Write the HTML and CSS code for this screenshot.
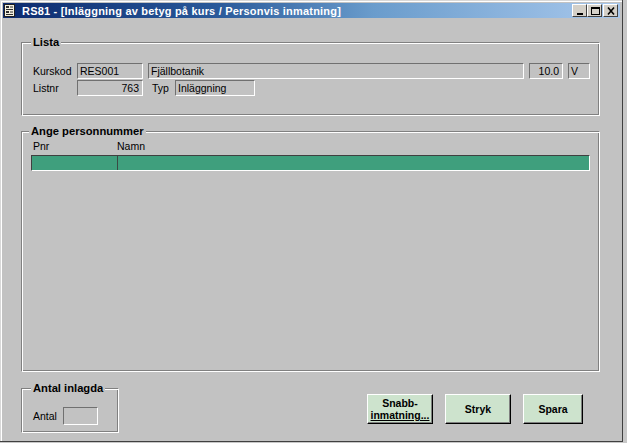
FILE: index.html
```html
<!DOCTYPE html>
<html lang="sv">
<head>
<meta charset="utf-8">
<title>RS81</title>
<link rel="stylesheet" href="styles.css">
</head>
<body>
<div class="window">
  <div class="titlebar">
    <svg class="appicon" width="13" height="13" viewBox="0 0 13 13">
      <rect x="1.5" y="0.5" width="10" height="12" fill="#f4f0e0" stroke="#202020"/>
      <rect x="3" y="2" width="3" height="2" fill="#303030"/>
      <line x1="7" y1="3" x2="10" y2="3" stroke="#303030"/>
      <rect x="3" y="5" width="7" height="1" fill="#303030"/>
      <rect x="3" y="7" width="3" height="2" fill="#303030"/>
      <line x1="7" y1="8" x2="10" y2="8" stroke="#303030"/>
      <rect x="3" y="10" width="7" height="1" fill="#303030"/>
    </svg>
    <span class="title">RS81 - [Inläggning av betyg på kurs / Personvis inmatning]</span>
    <div class="capbtns">
      <span class="capbtn"><svg width="12" height="10" viewBox="0 0 12 10"><rect x="3" y="7" width="6" height="2" fill="#000"/></svg></span>
      <span class="capbtn"><svg width="12" height="10" viewBox="0 0 12 10"><rect x="2.5" y="1.5" width="8" height="7" fill="none" stroke="#000"/><rect x="2" y="1" width="9" height="2" fill="#000"/></svg></span>
      <span class="capbtn"><svg width="12" height="10" viewBox="0 0 12 10"><path d="M3 1.5 L9 8.5 M9 1.5 L3 8.5" stroke="#000" stroke-width="1.6"/></svg></span>
    </div>
  </div>

  <div class="content">
    <fieldset class="group lista">
      <legend>Lista</legend>
      <div class="row">
        <span class="lbl">Kurskod</span>
        <span class="field w66">RES001</span>
        <span class="field grow">Fjällbotanik</span>
        <span class="field w34 right">10.0</span>
        <span class="field w22">V</span>
      </div>
      <div class="row">
        <span class="lbl">Listnr</span>
        <span class="field w66 right">763</span>
        <span class="lbl typ">Typ</span>
        <span class="field w80">Inläggning</span>
      </div>
    </fieldset>

    <fieldset class="group persnr">
      <legend>Ange personnummer</legend>
      <div class="colheads">
        <span class="colpnr">Pnr</span>
        <span>Namn</span>
      </div>
      <div class="greenrow">
        <span class="cell pnr"></span>
        <span class="cell namn"></span>
      </div>
    </fieldset>

    <div class="bottom">
      <fieldset class="group antal">
        <legend>Antal inlagda</legend>
        <div class="antalrow">
          <span class="lbl">Antal</span>
          <span class="field antalfield"></span>
        </div>
      </fieldset>
      <div class="buttons">
        <button class="btn snabb">Snabb-<br><u>inmatning...</u></button>
        <button class="btn stryk">Stryk</button>
        <button class="btn spara">Spara</button>
      </div>
    </div>
  </div>
</div>
</body>
</html>
```

FILE: styles.css
```css
html, body {
  margin: 0;
  padding: 0;
}
body {
  background: #c8c8c8;
  width: 627px;
  height: 443px;
  overflow: hidden;
  font-family: "Liberation Sans", Arial, sans-serif;
  font-size: 10.5px;
  color: #000;
}
.window {
  box-sizing: border-box;
  width: 623px;
  height: 442px;
  background: #c2c2c2;
  border-right: 1px solid #404040;
  border-bottom: 1px solid #404040;
  box-shadow: inset 1px 1px 0 #d8d8d8, inset 2px 2px 0 #fff;
  padding: 3px 2px 0 3px;
  display: flex;
  flex-direction: column;
}
.titlebar {
  height: 15px;
  flex: none;
  display: flex;
  align-items: center;
  background: linear-gradient(to right, #0c2a6e 0%, #2a5a9a 35%, #6a9ccc 60%, #a8c8ec 100%);
  padding-right: 2px;
}
.appicon {
  flex: none;
}
.title {
  margin-left: 6px;
  color: #fff;
  font-weight: bold;
  font-size: 11px;
  white-space: nowrap;
  letter-spacing: 0.2px;
}
.capbtns {
  margin-left: auto;
  display: flex;
}
.capbtn {
  box-sizing: border-box;
  width: 15px;
  height: 13px;
  background: #d4d0c8;
  border-top: 1px solid #fff;
  border-left: 1px solid #fff;
  border-right: 1px solid #404040;
  border-bottom: 1px solid #404040;
  display: flex;
  align-items: center;
  justify-content: center;
}
.capbtn:last-child {
  margin-left: 1px;
}
.content {
  flex: 1;
  display: flex;
  flex-direction: column;
  padding: 18px 20px 8px 18px;
  min-height: 0;
}
.group {
  margin: 0;
  min-width: 0;
  border: 1px solid;
  border-color: #808080 #fff #fff #808080;
  box-shadow: inset 1px 1px 0 #fff, inset -1px -1px 0 #808080;
  padding: 0 9px 0 11px;
}
.group legend {
  font-weight: bold;
  font-size: 11.2px;
  line-height: 13px;
  padding: 0 2px;
  margin-left: -2px;
  background: #c2c2c2;
}
.lista {
  padding-top: 14px;
  padding-bottom: 19px;
  display: flex;
  flex-direction: column;
  gap: 1px;
}
.row {
  display: flex;
  align-items: center;
  height: 16px;
}
.lbl {
  width: 44px;
  flex: none;
  white-space: nowrap;
}
.lbl.typ {
  width: 23px;
  margin-left: 9px;
}
.field {
  box-sizing: border-box;
  height: 16px;
  line-height: 14px;
  border-top: 1px solid #707070;
  border-left: 1px solid #707070;
  border-right: 1px solid #fff;
  border-bottom: 1px solid #fff;
  padding: 0 3px 0 2px;
  white-space: nowrap;
  overflow: hidden;
  flex: none;
}
.field + .field {
  margin-left: 5px;
}
.right {
  text-align: right;
}
.w66 { width: 66px; }
.w34 { width: 34px; }
.w22 { width: 22px; }
.w80 { width: 80px; }
.grow { flex: 1; }

.persnr {
  flex: 1;
  margin-top: 9px;
  padding-left: 9px;
  padding-right: 9px;
  padding-top: 2px;
}
.colheads {
  display: flex;
  height: 13px;
  line-height: 13px;
  padding-left: 2px;
}
.colpnr {
  width: 84px;
}
.greenrow {
  box-sizing: border-box;
  height: 16px;
  display: flex;
  background: #3f9f7d;
  border-top: 1px solid #404040;
  border-left: 1px solid #404040;
  border-right: 1px solid #fff;
  border-bottom: 1px solid #fff;
  margin-top: 2px;
}
.cell.pnr {
  width: 85px;
  border-right: 1px solid #3a4a44;
}
.cell.namn {
  flex: 1;
}

.bottom {
  flex: none;
  margin-top: 10px;
  display: flex;
  align-items: flex-start;
}
.antal {
  box-sizing: border-box;
  width: 98px;
  height: 51px;
  padding-top: 12px;
  padding-left: 11px;
}
.antalrow {
  display: flex;
  align-items: center;
}
.antalrow .lbl {
  width: 30px;
}
.antalfield {
  width: 35px;
  height: 18px;
}
.buttons {
  margin-left: auto;
  margin-right: 17px;
  margin-top: 12px;
  display: flex;
  gap: 12px;
}
.btn {
  box-sizing: border-box;
  height: 30px;
  margin: 0;
  padding: 0;
  background: #cde3cd;
  border-top: 1px solid #fff;
  border-left: 1px solid #fff;
  border-right: 1px solid #000;
  border-bottom: 1px solid #000;
  box-shadow: inset -1px -1px 0 #808080;
  font-family: "Liberation Sans", Arial, sans-serif;
  font-weight: bold;
  font-size: 10.5px;
  line-height: 12px;
  color: #000;
}
.btn u {
  text-decoration: underline;
}
.snabb { width: 66px; }
.stryk { width: 66px; }
.spara { width: 60px; }
```
